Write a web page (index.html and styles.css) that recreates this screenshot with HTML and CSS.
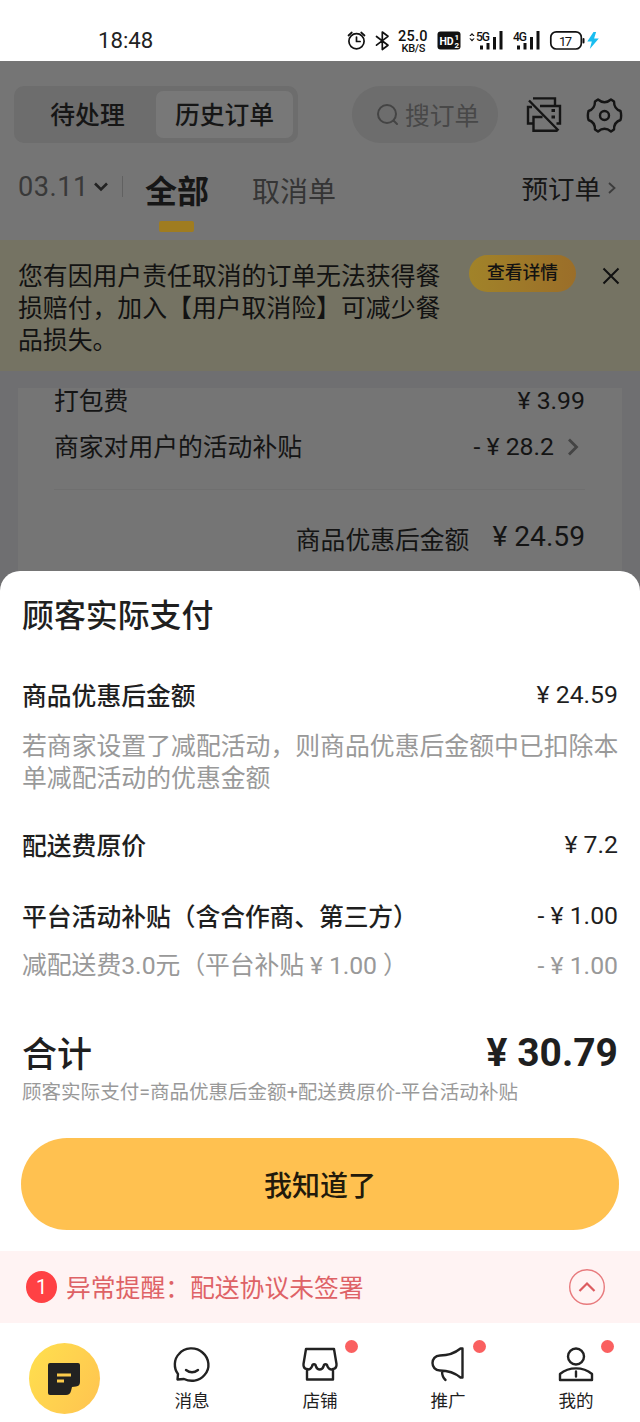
FILE: index.html
```html
<!DOCTYPE html>
<html lang="zh-CN">
<head>
<meta charset="utf-8">
<title>顾客实际支付</title>
<link rel="stylesheet" href="styles.css">
</head>
<body>
<div class="phone">
  <div class="status">
    <span class="clock">18:48</span>
    <svg class="status-icons" width="260" height="36" viewBox="345 22 260 36">
      <g fill="none" stroke="#111" stroke-width="1.7" stroke-linecap="round" stroke-linejoin="round">
        <circle cx="356.5" cy="41.3" r="7.6"/>
        <path d="M356.5 37v4.5h3.6M348.5 35.5l3.3-3M364.500 35.5l-3.300-3"/>
        <path d="M376.500 36.500l11.500 8.700-5.700 4.300V32l5.700 4.300-11.500 8.900"/>
        <rect x="550.8" y="31.8" width="30.500" height="17.200" rx="5.500"/>
        <path d="M583.500 39v3.500" stroke-width="2"/>
      </g>
      <rect x="437.500" y="31.500" width="23" height="18" rx="3" fill="#111"/>
      <g fill="#111">
        <path d="M480 45.500h3v4h-3zM486.500 43h3v6.500h-3zM493 37h3v12.500h-3zM499.500 31h3v18.500h-3z"/>
        <path d="M517 45.500h3v4h-3zM523.500 43h3v6.500h-3zM530 37h3v12.500h-3zM536.500 31h3v18.500h-3z"/>
        <path d="M469.300 36l2.700-3 2.700 3h-1.600l-1.100-1.200-1.100 1.200zM469.300 38.500l2.700 3 2.700-3h-1.600l-1.100 1.200-1.100-1.200z"/>
      </g>
      <path d="M593.500 32l-6.200 9.500h4.500l-2 7.500 9-10.500h-4.700l2-6.500z" fill="#19bdf0"/>
      <g class="status-text">
        <text x="398" y="40.500" font-size="14.500" textLength="29.500">25.0</text>
        <text x="401.500" y="51.500" font-size="11" textLength="24">KB/S</text>
        <text x="439.500" y="45" font-size="10.500" font-weight="700" fill="#fff" textLength="14">HD</text>
        <text x="454.500" y="40" font-size="8" font-weight="700" fill="#fff">1</text>
        <text x="454.500" y="48" font-size="8" font-weight="700" fill="#fff">2</text>
        <text x="476" y="41" font-size="12" textLength="14">5G</text>
        <text x="513" y="41" font-size="12" textLength="14">4G</text>
        <text x="559" y="45.500" font-size="13" font-weight="400" textLength="13">17</text>
      </g>
    </svg>
  </div>

  <div class="header">
    <div class="toolbar">
      <div class="segment"><span>待处理</span><span class="on">历史订单</span></div>
      <div class="search">
        <svg width="24" height="24" viewBox="0 0 24 24" fill="none" stroke="#444" stroke-width="2" stroke-linecap="round"><circle cx="11" cy="11" r="9"/><path d="M17.500 17.500l3.500 3.500"/></svg>
        <span>搜订单</span>
      </div>
      <svg class="printer" width="36" height="36" viewBox="526 97 36 36" fill="none" stroke="#151515" stroke-width="2.400">
        <path d="M533 98.400h22v7.600M540 106h20v17.500h-3.500M542.500 117h-9v13.800h24M533.500 123.500H528V107h4M529 100.500l29.500 30"/>
        <path d="M551.500 110.500h3.500M551.500 117h3.500" stroke-width="2.800"/>
      </svg>
      <svg class="gear" width="38" height="38" viewBox="585 95 38 38" fill="none" stroke="#151515" stroke-width="2.400" stroke-linejoin="round">
        <path d="M595 100.500L598 98.500Q604.500 104 611 98.500L614 100.500Q614 108 620.500 110Q621.800 114.500 620.500 119Q614 121 614 128.500L611 130.500Q604.500 125 598 130.500L595 128.500Q595 121 588.500 119Q587.200 114.500 588.500 110Q595 108 595 100.500z"/>
        <circle cx="604.500" cy="114.500" r="4.500"/>
      </svg>
    </div>
    <div class="filters">
      <span class="date">03.11</span>
      <svg class="down" width="16" height="12" viewBox="0 0 16 12" fill="none" stroke="#222" stroke-width="2.600"><path d="M2 2.500l6 6 6-6"/></svg>
      <i class="vline"></i>
      <span class="tab-all">全部</span>
      <span class="tab-cancel">取消单</span>
      <span class="preorder">预订单</span>
      <svg class="more" width="10" height="14" viewBox="0 0 10 14" fill="none" stroke="#3c3c3c" stroke-width="1.800"><path d="M2 2l5.500 5L2 12"/></svg>
    </div>
  </div>

  <div class="notice">
    <p>您有因用户责任取消的订单无法获得餐损赔付，加入【用户取消险】可减少餐品损失。</p>
    <span class="detail">查看详情</span>
    <svg width="18" height="18" viewBox="0 0 18 18" stroke="#111" stroke-width="2"><path d="M1.500 1.500l15 15M16.500 1.500l-15 15"/></svg>
  </div>

  <div class="order-area">
    <div class="order">
      <div class="line fee"><span>打包费</span><span>¥ 3.99</span></div>
      <div class="line subsidy"><span>商家对用户的活动补贴</span><span class="amount">- ¥ 28.2<svg width="12" height="18" viewBox="0 0 12 18" fill="none" stroke="#444" stroke-width="2.800"><path d="M2 1.500L9.500 9 2 16.500"/></svg></span></div>
      <div class="subtotal"><span>商品优惠后金额</span><b>¥ 24.59</b></div>
    </div>
  </div>

  <div class="sheet">
    <h1>顾客实际支付</h1>
    <div class="row"><strong>商品优惠后金额</strong><span>¥ 24.59</span></div>
    <p class="hint">若商家设置了减配活动，则商品优惠后金额中已扣除本单减配活动的优惠金额</p>
    <div class="row delivery"><strong>配送费原价</strong><span>¥ 7.2</span></div>
    <div class="row platform"><strong>平台活动补贴<span class="paren">（含合作商、第三方）</span></strong><span>- ¥ 1.00</span></div>
    <div class="row muted"><span>减配送费3.0元<span class="paren">（平台补贴 ¥ 1.00 ）</span></span><span>- ¥ 1.00</span></div>
    <div class="row total"><strong>合计</strong><b>¥ 30.79</b></div>
    <p class="formula">顾客实际支付=商品优惠后金额+配送费原价-平台活动补贴</p>
    <button class="ok">我知道了</button>
  </div>

  <div class="alert">
    <span class="count">1</span>
    <span class="message">异常提醒：配送协议未签署</span>
    <svg width="38" height="38" viewBox="0 0 38 38" fill="none" stroke="#e87a7d"><circle cx="19" cy="19" r="17.300" stroke-width="1.400"/><path d="M11.500 23l7.500-7.500 7.500 7.500" stroke="#dc5c60" stroke-width="2.200"/></svg>
  </div>

  <nav class="tabs">
    <div class="tab home">
      <span class="disc"><svg width="34" height="34" viewBox="0 0 34 34"><path d="M3 1h28a2 2 0 0 1 2 2v17q0 4-4 4.500l-4 .5-1 4q-1 4-5 4H3a2 2 0 0 1-2-2V3a2 2 0 0 1 2-2z" fill="#222"/><path d="M10 13h14M10 19h7" stroke="#fccb4b" stroke-width="2.800"/></svg></span>
    </div>
    <div class="tab">
      <svg width="40" height="38" viewBox="0 0 40 38"><path d="M5.500 33.500l.5-5.500C1.500 22.500 1.800 13 7 8 12.500 1 24 .5 30.500 6.500c7 6 8 16 2 22.500-5.500 6.500-14 7-20.500 4z"/><path d="M14 24q6 4.500 12 0"/></svg>
      <span>消息</span>
    </div>
    <div class="tab">
      <svg width="40" height="38" viewBox="0 0 40 38"><path d="M6 3h28l2.500 15c.5 5.500-6.500 7.500-9 2.500-.5-3-3.500-3-4 0-1.500 4-6 4-7.500 0-.5-3-3.500-3-4 0-2.500 5-9 3-8.500-2.500zM7 23v10.500h26V23"/></svg>
      <span>店铺</span><i class="dot"></i>
    </div>
    <div class="tab">
      <svg width="40" height="38" viewBox="0 0 40 38"><path d="M12 9.500C20 9.500 27 7 32.500 2.500h2v29h-2C27 27 20 24.500 12 24.500 2 24.500 2 9.500 12 9.500zM14 25q0 6 3.500 9"/></svg>
      <span>推广</span><i class="dot"></i>
    </div>
    <div class="tab">
      <svg width="40" height="38" viewBox="0 0 40 38"><circle cx="20" cy="10.500" r="8"/><path d="M4 34v-6c9-7.500 23-7.500 32 0v6zM20 25.500v5"/></svg>
      <span>我的</span><i class="dot"></i>
    </div>
  </nav>
</div>
</body>
</html>
```
FILE: styles.css
```css
* { box-sizing: border-box; }
body { margin: 0; background: #fff; }
h1, p { margin: 0; }
svg { display: block; flex: none; }
.phone {
  width: 640px; height: 1422px; overflow: hidden;
  display: flex; flex-direction: column;
  font-family: Roboto, "Noto Sans CJK SC", sans-serif;
  font-size: 24.8px; line-height: 32px; color: #1f1f1f; white-space: nowrap;
}

.status { height: 61px; flex: none; display: flex; justify-content: space-between; padding: 22px 35px 0 98px; }
.clock { font-size: 22.200px; line-height: 37px; color: #222; }
.status-text { font-family: Roboto, sans-serif; font-weight: 500; fill: #111; }

.header { height: 179px; flex: none; background: #757575; color: #161616; padding-top: 25px; }
.toolbar { display: flex; align-items: center; height: 57px; padding-left: 14px; }
.segment { display: flex; width: 284px; height: 57px; padding: 5px; border-radius: 10px; background: #6d6d6d; line-height: 49px; font-weight: 500; text-align: center; }
.segment span { flex: 1; }
.segment .on { flex: none; width: 137px; border-radius: 7px; background: #787878; }
.search { display: flex; align-items: center; gap: 5px; width: 146px; height: 57px; margin-left: 54px; padding-left: 24px; border-radius: 29px; background: #6d6d6d; color: #484848; }
.search span { padding-top: 4px; }
.printer { margin-left: 28px; }
.gear { margin-left: 23px; }
.filters { display: flex; align-items: center; height: 78px; padding-left: 18px; line-height: 36px; }
.date { font-size: 27.200px; letter-spacing: .5px; color: #393939; width: 75px; margin-top: 9px; }
.down { margin-top: 9px; }
.vline { width: 1px; height: 21px; margin: 8px 22px 0 13px; background: #616161; }
.tab-all { width: 64px; height: 78px; font-size: 32px; font-weight: 700; line-height: 98px; position: relative; }
.tab-all::after { content: ""; position: absolute; left: 14px; top: 78px; width: 35px; height: 11px; border-radius: 2px; background: #9f7c20; }
.tab-cancel { margin-left: 43px; font-size: 28px; color: #353535; line-height: 36px; padding-top: 21px; }
.preorder { margin-left: auto; font-size: 26.500px; padding-top: 16px; }
.more { margin: 12px 23px 0 6px; }

.notice { height: 131px; flex: none; display: flex; align-items: flex-start; padding: 21px 20px 0 18px; background: #757363; color: #121212; }
.notice p { width: 430px; font-size: 24.850px; white-space: normal; word-break: break-all; }
.detail { width: 107px; height: 37px; margin: -6px 26px 0 21px; border-radius: 19px; background: linear-gradient(90deg, #a18329, #9b6e29); font-size: 17.800px; line-height: 36px; font-weight: 500; text-align: center; }
.notice svg { margin-top: 6px; }

.order-area { height: 220px; flex: none; padding: 17px 18px 0; background: #6f6f71; }
.order { height: 203px; padding: 0 37px 0 36px; background: #757575; color: #141414; }
.line { display: flex; justify-content: space-between; }
.fee { height: 26px; line-height: 26px; }
.fee span:first-child { line-height: 28px; }
.subsidy { height: 76px; padding-top: 17px; border-bottom: 1px solid #6f6f6f; }
.subsidy > span:first-child { line-height: 34px; }
.amount { display: flex; align-items: center; height: 32px; gap: 13px; padding-right: 6px; }
.subtotal { display: flex; justify-content: flex-end; gap: 23px; padding-top: 31px; }
.subtotal span { line-height: 40px; }
.subtotal b { font-weight: 400; font-size: 28.200px; }

.sheet {
  position: relative; flex: none; height: 680px; margin-top: -20px; padding: 25px 22px 0;
  background: #fff; border-radius: 20px 20px 0 0;
}
h1 { font-size: 31.900px; line-height: 40px; font-weight: 500; }
.row { display: flex; justify-content: space-between; height: 32px; line-height: 30px; }
.row strong { font-weight: 500; line-height: 34px; }
.paren { letter-spacing: -.1px; }
h1 + .row { margin-top: 44px; }
.hint { margin: 19px -10px 0 0; width: 605px; color: #999; font-size: 24.850px; white-space: normal; word-break: break-all; }
.delivery { margin-top: 35px; }
.platform { margin-top: 39px; }
.muted { margin-top: 18px; color: #999; }
.total { height: 44px; margin-top: 49px; line-height: 42px; font-size: 35px; }
.total strong { line-height: 47px; }
.total b { font-size: 39px; }
.formula { margin-top: 5px; color: #999; font-size: 19.550px; line-height: 24px; }
.ok { display: block; width: 598px; height: 92px; margin: 33px 0 0 -1px; padding: 5px 0 0; border: 0; border-radius: 46px; background: #ffc150; color: #221a0b; font: 500 28px/40px Roboto, "Noto Sans CJK SC", sans-serif; }

.alert { height: 72px; flex: none; display: flex; align-items: center; padding: 0 34px 0 26px; background: #fff3f3; color: #de6266; }
.count { width: 31px; height: 32px; border-radius: 50%; background: #ff4144; color: #fff; font-size: 20px; text-align: center; }
.message { flex: 1; margin-left: 9px; padding-top: 3px; }

.tabs { flex: 1; display: flex; background: #fff; }
.tab { width: 128px; padding-top: 23px; display: flex; flex-direction: column; align-items: center; position: relative; font-size: 17.600px; line-height: 24px; }
.tab > svg { fill: none; stroke: #222; stroke-width: 2.400; stroke-linejoin: round; stroke-linecap: round; }
.tab > span { margin-top: 5px; }
.home { padding-top: 20px; }
.tab > .disc { display: grid; place-items: center; width: 71px; height: 71px; margin-top: 0; border-radius: 50%; background: linear-gradient(120deg, #ffe04e, #ffc350); }
.dot { position: absolute; left: 89px; top: 17px; width: 13px; height: 13px; border-radius: 50%; background: #fa6060; }
```
